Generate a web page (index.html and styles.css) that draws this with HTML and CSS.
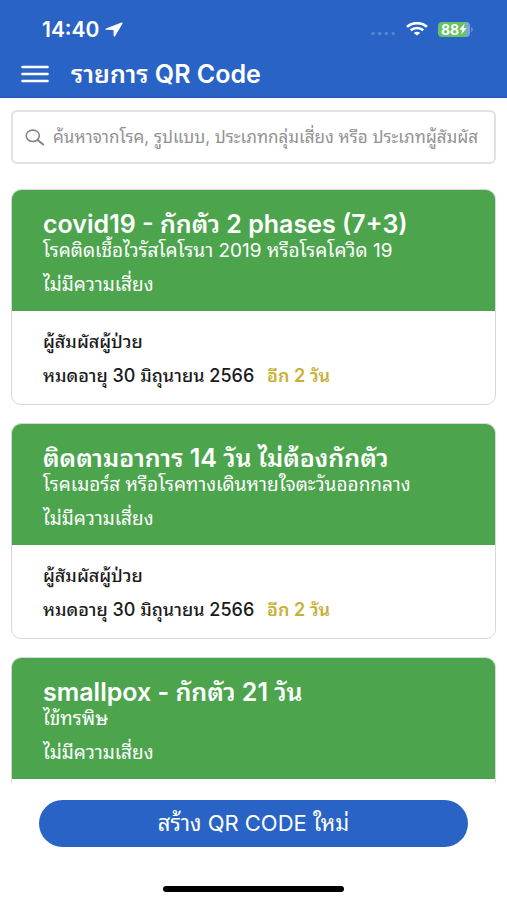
FILE: index.html
```html
<!DOCTYPE html>
<html lang="th">
  <head>
    <meta charset="UTF-8" />
    <meta name="viewport" content="width=device-width, initial-scale=1.0" />
    <title>รายการ QR Code</title>
    <link rel="stylesheet" href="styles.css">
  </head>
  <body>
    <header class="header">
      <div class="status-bar">
        <span class="status-time">14:40</span>
        <svg class="icon-location" width="18" height="15" viewBox="0 0 18 15" fill="#fff" aria-hidden="true">
          <path d="M16.5.6 1 6.4c-.9.4-.8 1.3.3 1.3l7.2.2.1 5.7c0 1 1.1 1.2 1.6.3l7.2-12.2c.4-.8-.1-1.4-.9-1.1z" />
        </svg>
        <div class="status-right">
          <svg width="26" height="5" viewBox="0 0 26 5" fill="#5584d3" aria-hidden="true">
            <circle cx="3" cy="2.5" r="1.8" />
            <circle cx="9.7" cy="2.5" r="1.8" />
            <circle cx="16.4" cy="2.5" r="1.8" />
            <circle cx="23.1" cy="2.5" r="1.8" />
          </svg>
          <svg class="icon-wifi" width="22" height="14" viewBox="0 0 22 14" fill="none" stroke="#fff" stroke-width="2.6" aria-hidden="true">
            <path d="M1 4.8C6.6-.1 15.4-.1 21 4.8" />
            <path d="M4.7 8.2c3.6-3 9-3 12.6 0" />
            <path d="M11 13.6 7.8 10.9c1.8-1.5 4.6-1.5 6.4 0z" fill="#fff" stroke="none" />
          </svg>
          <div class="battery">
            <span>88</span>
            <svg width="8" height="12" viewBox="0 0 8 12" fill="#fff" aria-hidden="true">
              <path d="M5.6.4.3 6.7h3L2.2 11.6 7.7 5H4.6z" />
            </svg>
          </div>
          <svg class="battery-tip" width="2" height="5" viewBox="0 0 2 5" fill="#5f91d0" aria-hidden="true">
            <path d="M0 0c2.6.8 2.6 4.2 0 5z" />
          </svg>
        </div>
      </div>
      <div class="nav-bar">
        <button class="menu-button" type="button" aria-label="เมนู">
          <svg width="28" height="18" viewBox="0 0 28 18" stroke="#fff" stroke-width="2.6" stroke-linecap="round" aria-hidden="true">
            <path d="M1.5 2h25M1.5 9h25M1.5 16h25" />
          </svg>
        </button>
        <h1 class="title">รายการ QR Code</h1>
      </div>
    </header>

    <main class="content">
      <label class="search">
        <svg class="icon-search" width="20" height="17" viewBox="0 0 20 17" fill="none" stroke="#858585" stroke-width="1.6" stroke-linecap="round" aria-hidden="true">
          <ellipse cx="7.8" cy="6.8" rx="6.6" ry="5.7" />
          <path d="m12.6 10.9 5.6 4.6" stroke-width="2" />
        </svg>
        <input
          class="search-input"
          type="text"
          aria-label="ค้นหา"
          placeholder="ค้นหาจากโรค, รูปแบบ, ประเภทกลุ่มเสี่ยง หรือ ประเภทผู้สัมผัส"
        />
      </label>

      <article class="card">
        <div class="card-head">
          <h2 class="card-title">covid19 - กักตัว 2 phases (7+3)</h2>
          <p class="card-disease">โรคติดเชื้อไวรัสโคโรนา 2019 หรือโรคโควิด 19</p>
          <p class="card-risk">ไม่มีความเสี่ยง</p>
        </div>
        <div class="card-body">
          <p>ผู้สัมผัสผู้ป่วย</p>
          <p>หมดอายุ 30 มิถุนายน 2566 <span class="remain">อีก 2 วัน</span></p>
        </div>
      </article>

      <article class="card">
        <div class="card-head">
          <h2 class="card-title">ติดตามอาการ 14 วัน ไม่ต้องกักตัว</h2>
          <p class="card-disease">โรคเมอร์ส หรือโรคทางเดินหายใจตะวันออกกลาง</p>
          <p class="card-risk">ไม่มีความเสี่ยง</p>
        </div>
        <div class="card-body">
          <p>ผู้สัมผัสผู้ป่วย</p>
          <p>หมดอายุ 30 มิถุนายน 2566 <span class="remain">อีก 2 วัน</span></p>
        </div>
      </article>

      <article class="card">
        <div class="card-head">
          <h2 class="card-title">smallpox - กักตัว 21 วัน</h2>
          <p class="card-disease">ไข้ทรพิษ</p>
          <p class="card-risk">ไม่มีความเสี่ยง</p>
        </div>
        <div class="card-body"></div>
      </article>
    </main>

    <footer class="footer">
      <button class="create-button" type="button">สร้าง QR CODE ใหม่</button>
      <div class="home-indicator"></div>
    </footer>
  </body>
</html>
```

FILE: styles.css
```css
* {
  box-sizing: border-box;
}
body {
  margin: 0;
  height: 100vh;
  display: flex;
  flex-direction: column;
  overflow: hidden;
  font-family: Inter, "Noto Sans Thai Looped", "Noto Looped Thai", Loma, "Noto Sans Thai", "Noto Sans", sans-serif;
  font-size: 18px;
  background-color: #fff;
  color: #1a1a1a;
}
h1,
h2,
p {
  margin: 0;
}
button {
  border: none;
  cursor: pointer;
  font-family: inherit;
}

/* Header */
.header {
  flex: none;
  background-color: #2a63c6;
  color: #fff;
  border-bottom: 1px solid #2355b0;
}
.status-bar {
  display: flex;
  align-items: center;
  height: 50px;
  padding: 8px 34px 0 42px;
}
.status-time {
  font-size: 21px;
  font-weight: 600;
}
.icon-location {
  margin-left: 6px;
}
.status-right {
  display: flex;
  align-items: center;
  gap: 10px;
  margin-left: auto;
}
.status-right svg:first-child {
  margin-top: 8px;
}
.battery {
  display: flex;
  align-items: center;
  justify-content: center;
  width: 32px;
  height: 15px;
  border-radius: 4px;
  background: linear-gradient(to right, #65c466 88%, #7ba3dd 88%);
  font-size: 14px;
  font-weight: 700;
}
.battery-tip {
  margin-left: -9px;
}
.nav-bar {
  display: flex;
  align-items: center;
  gap: 22px;
  height: 47px;
  padding: 0 21px;
}
.menu-button {
  display: flex;
  padding: 0;
  background: none;
}
.title {
  font-size: 25px;
  font-weight: 600;
  line-height: 32px;
  white-space: nowrap;
}

/* List */
.content {
  flex: 1;
  min-height: 0;
  display: flex;
  flex-direction: column;
  gap: 18px;
  padding: 12px 11px 0;
  overflow: hidden;
}
.search {
  flex: none;
  display: flex;
  align-items: center;
  gap: 8px;
  height: 54px;
  margin-bottom: 7px;
  padding: 0 6px 0 12px;
  border: 2px solid #e2e2e2;
  border-radius: 6px;
}
.icon-search {
  flex: none;
}
.search-input {
  flex: 1;
  min-width: 0;
  height: 32px;
  padding: 0;
  border: none;
  outline: none;
  background: none;
  font-family: inherit;
  font-size: 17px;
}
.search-input::placeholder {
  color: #929292;
}
.card {
  flex: none;
  height: 216px;
  border: 1px solid #d8d8d8;
  border-radius: 10px;
  overflow: hidden;
}
.card-head {
  height: 121px;
  padding: 19px 31px 0;
  background-color: #4ca54d;
  color: #fff;
}
.card-title {
  font-size: 25px;
  font-weight: 600;
  line-height: 30px;
  white-space: nowrap;
}
.card-disease,
.card-risk {
  font-size: 19px;
  line-height: 24px;
}
.card-risk {
  margin-top: 10px;
}
.card-body {
  display: flex;
  flex-direction: column;
  gap: 10px;
  padding: 19px 31px;
  font-weight: 500;
  line-height: 24px;
}
.remain {
  margin-left: 8px;
  color: #c9b037;
  font-weight: 600;
}

/* Footer */
.footer {
  flex: none;
  display: flex;
  flex-direction: column;
  align-items: center;
  gap: 39px;
  padding: 17px 39px 8px;
}
.create-button {
  width: 100%;
  height: 47px;
  padding: 0 0 6px;
  border-radius: 24px;
  background-color: #2a63c6;
  color: #fff;
  font-size: 22px;
}
.home-indicator {
  width: 36%;
  min-width: 181px;
  height: 6px;
  border-radius: 3px;
  background-color: #000;
}
```
